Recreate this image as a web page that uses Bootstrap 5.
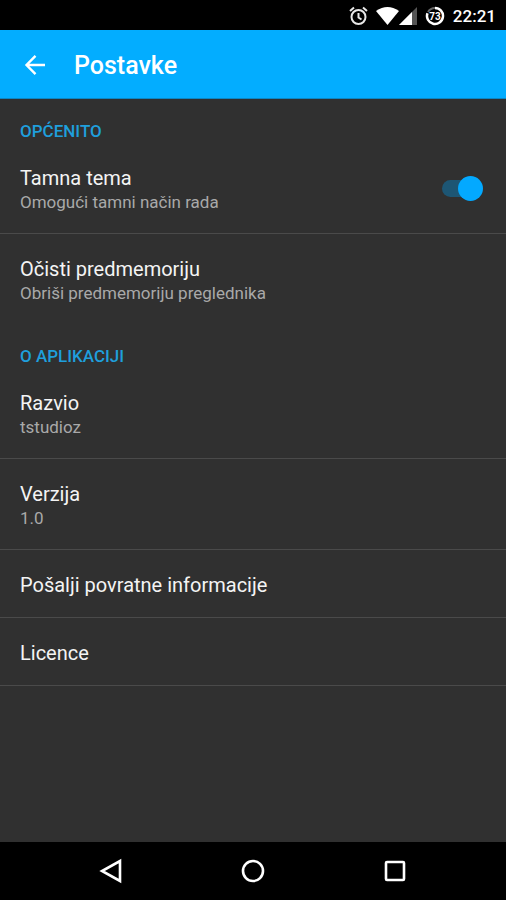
<!DOCTYPE html>
<html lang="hr">
<head>
<meta charset="utf-8">
<meta name="viewport" content="width=device-width, initial-scale=1">
<title>Postavke</title>
<link href="https://cdn.jsdelivr.net/npm/bootstrap@5.3.0/dist/css/bootstrap.min.css" rel="stylesheet">
<style>
body { font-family: Roboto, "Noto Sans", sans-serif; background: #303030; color: #f4f4f4; }
svg { display: block; }
.status-bar { height: 30px; padding: 2px 10px 0 0; font-size: 17px; line-height: 24px; }
.app-bar { height: 69px; padding: 2px 20px 0; background: #03adff; border-bottom: 1px solid #0c86c4; }
.app-bar h1 { font-size: 25px; line-height: 32px; margin: 2px 0 0 24px; }
.medium-text { font-weight: 500; }
.section-title { font-size: 17px; line-height: 23px; padding: 21px 20px 0; margin: 0; color: #1f9fdc; font-weight: 500; }
.setting { background: transparent; color: #f4f4f4;
  padding: 22px 20px 19px; border: 0; border-bottom: 1px solid #4a4a4a; font-size: 20px; line-height: 26px; text-align: left; }
.setting:hover, .setting:focus { background: #383838; color: #fff; }
.setting.no-line { border-bottom: 0; }
.setting-note { font-size: 17px; line-height: 23px; color: #a9a9a9; }
.theme-switch { appearance: none; display: flex; align-items: center; justify-content: flex-end; width: 38px; height: 17px;
  margin: 0 6px 2px 0; border-radius: 9px; background: #1d5674; }
.theme-switch::before { content: ""; flex: none; width: 25px; height: 25px; margin: 0 -3px; border-radius: 50%; background: #03a9ff; }
.theme-switch:not(:checked) { justify-content: flex-start; background: #555; }
.theme-switch:not(:checked)::before { background: #bbb; }
.nav-keys { height: 58px; padding: 0 40px; }
</style>
<script src="https://cdn.jsdelivr.net/npm/bootstrap@5.3.0/dist/js/bootstrap.bundle.min.js"></script>
</head>
<body class="d-flex flex-column min-vh-100">
<div class="status-bar bg-black text-white d-flex align-items-center justify-content-end medium-text">
  <svg class="me-2" width="19" height="20" viewBox="0 0 19 20" fill="none" stroke="#e8e8e8" stroke-width="2" aria-label="Alarm" role="img">
    <circle cx="9.500" cy="11" r="7"/><path d="M9.500 7v4.500l3 2M1 5l4-3.500M18 5l-4-3.500"/>
  </svg>
  <svg width="23" height="18" viewBox="0 0 23 18" fill="#fff" aria-label="Wi-Fi" role="img"><path d="M0 4Q11.500-4 23 4L11.500 18z"/></svg>
  <svg class="me-2" width="18" height="18" viewBox="0 0 18 18" aria-label="Signal" role="img"><path d="M18 0v18H0z" fill="#555"/><path d="M13 5v13H0z" fill="#fff"/></svg>
  <svg class="me-2" width="20" height="20" viewBox="0 0 20 20" aria-label="Baterija" role="img">
    <path d="M10 2a8 8 0 1 1-7.500 5.200" fill="none" stroke="#fff" stroke-width="2.500"/><path d="M3 6a8 8 0 0 1 7-4" fill="none" stroke="#666" stroke-width="2"/>
    <text x="10" y="13.500" text-anchor="middle" font-size="10" font-weight="700" fill="#fff">73</text>
  </svg>
  <span>22:21</span>
</div>
<header class="app-bar d-flex align-items-center text-white">
  <button type="button" class="btn p-0 border-0" aria-label="Natrag">
    <svg width="30" height="30" viewBox="0 0 30 30" fill="none" stroke="#fff" stroke-width="2.400"><path d="M25 15H7M15.500 5.800 6.500 15l9 9.200"/></svg>
  </button>
  <h1 class="medium-text">Postavke</h1>
</header>
<main class="flex-grow-1">
  <h2 class="section-title">OPĆENITO</h2>
  <div class="list-group list-group-flush">
    <div class="setting d-flex align-items-center justify-content-between">
      <label for="dark-theme">Tamna tema<span class="setting-note d-block">Omogući tamni način rada</span></label>
      <input class="theme-switch" type="checkbox" role="switch" id="dark-theme" checked>
    </div>
    <button type="button" class="setting no-line w-100">Očisti predmemoriju<span class="setting-note d-block">Obriši predmemoriju preglednika</span></button>
  </div>
  <h2 class="section-title">O APLIKACIJI</h2>
  <div class="list-group list-group-flush">
    <div class="setting">Razvio<span class="setting-note d-block">tstudioz</span></div>
    <div class="setting">Verzija<span class="setting-note d-block">1.0</span></div>
    <button type="button" class="setting w-100">Pošalji povratne informacije</button>
    <button type="button" class="setting w-100">Licence</button>
  </div>
</main>
<nav class="nav-keys bg-black d-flex align-items-center" aria-label="Sustav">
  <button type="button" class="btn p-0 border-0 flex-fill d-flex justify-content-center" aria-label="Natrag">
    <svg width="26" height="26" viewBox="0 0 26 26" fill="none" stroke="#fff" stroke-width="2.600"><path d="M22 3v20L4 13z"/></svg>
  </button>
  <button type="button" class="btn p-0 border-0 flex-fill d-flex justify-content-center" aria-label="Početna">
    <svg width="26" height="26" viewBox="0 0 26 26" fill="none" stroke="#fff" stroke-width="2.600"><circle cx="13" cy="13" r="10"/></svg>
  </button>
  <button type="button" class="btn p-0 border-0 flex-fill d-flex justify-content-center" aria-label="Nedavno">
    <svg width="26" height="26" viewBox="0 0 26 26" fill="none" stroke="#fff" stroke-width="2.600"><rect x="4" y="4" width="18" height="18" rx="1"/></svg>
  </button>
</nav>
</body>
</html>
